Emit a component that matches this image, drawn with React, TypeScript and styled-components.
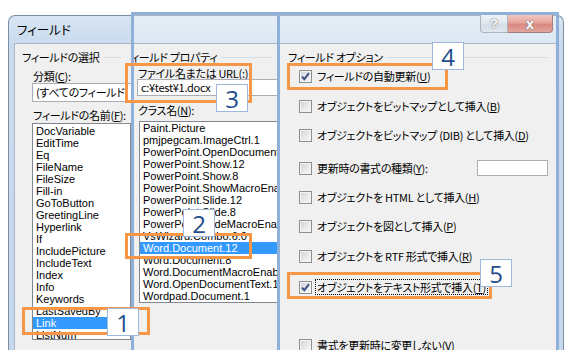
import React from 'react'
import styled, { createGlobalStyle } from 'styled-components'

const GlobalStyle = createGlobalStyle`
  html, body {
    margin: 0;
    padding: 0;
    background: #fff;
  }
`

const Page = styled.div`
  position: relative;
  width: 576px;
  height: 350px;
  box-sizing: border-box;
  padding: 15px 0 0 8px;
  overflow: hidden;
  background: #fff;
  font-family: "Noto Sans CJK JP", sans-serif;
  font-feature-settings: "palt";
  font-size: 11px;
  letter-spacing: -0.3px;
  color: #000;
`

const Window = styled.div`
  width: 556px;
  height: 335px;
  box-sizing: border-box;
  display: flex;
  flex-direction: column;
  padding: 0 6px 0 5px;
  border: 1px solid #7d8ea3;
  border-bottom: none;
  border-radius: 7px 7px 0 0;
  background: linear-gradient(to bottom, #d8e5f3 0, #cadbee 28px, #c6d8ed 100%);
`

const TitleBar = styled.div`
  height: 27px;
  display: flex;
  align-items: flex-start;
`

const Title = styled.div`
  padding-left: 3px;
  line-height: 27px;
  font-size: 12.5px;
  letter-spacing: 0;
`

const Caption = styled.div`
  margin: -1px 4px 0 auto;
  display: flex;
`

const CapButton = styled.div<{ $close?: boolean }>`
  width: ${p => (p.$close ? 45 : 28)}px;
  height: 18px;
  box-sizing: border-box;
  display: flex;
  align-items: center;
  justify-content: center;
  border: 1px solid ${p => (p.$close ? '#6f3a35' : '#7f8d9c')};
  border-top: none;
  border-left: ${p => (p.$close ? 'none' : undefined)};
  border-radius: ${p => (p.$close ? '0 0 4px 0' : '0 0 0 4px')};
  background: ${p =>
    p.$close
      ? 'linear-gradient(to bottom, #e8a89d 0%, #d7756a 45%, #c2483c 55%, #d2766a 100%)'
      : 'linear-gradient(to bottom, #e7edf4 0%, #d3dde8 45%, #bfcbd8 55%, #cfd9e4 100%)'};
  color: #fff;
  font-family: "Liberation Sans", sans-serif;
  font-weight: bold;
  font-size: ${p => (p.$close ? 14 : 13)}px;
  letter-spacing: 0;
  text-shadow: 0 0 2px #3d3d3d, 0 0 1px #3d3d3d;
`

const Client = styled.div`
  flex: 1;
  display: grid;
  grid-template-columns: 116px 148px 1fr;
  border: 1px solid #a9b6c5;
  border-bottom: none;
  background: #f0f0f0;
`

const Column = styled.div<{ $front?: boolean; $pad: number }>`
  position: ${p => (p.$front ? 'relative' : 'static')};
  z-index: ${p => (p.$front ? 1 : 'auto')};
  overflow: ${p => (p.$front ? 'hidden' : 'visible')};
  background: #f0f0f0;
  padding: 6px 0 0 ${p => p.$pad}px;
  display: flex;
  flex-direction: column;
  align-items: flex-start;
`

const GroupHead = styled.div<{ $shift?: number; $right: number }>`
  align-self: stretch;
  display: flex;
  align-items: center;
  gap: 4px;
  height: 14px;
  margin-left: ${p => p.$shift ?? 0}px;
  margin-right: ${p => p.$right}px;
  white-space: nowrap;

  &::after {
    content: '';
    flex: 1;
    height: 1px;
    background: #d5dfe5;
  }
`

const Label = styled.div<{ $mt: number; $left: number }>`
  height: 14px;
  line-height: 14px;
  margin: ${p => p.$mt}px 0 0 ${p => p.$left}px;
  white-space: nowrap;
`

const Field = styled.div<{ $w: number; $h: number; $mt: number; $left: number }>`
  width: ${p => p.$w}px;
  height: ${p => p.$h}px;
  box-sizing: border-box;
  margin: ${p => p.$mt}px 0 0 ${p => p.$left}px;
  padding-left: 3px;
  border: 1px solid #abadb3;
  background: #fff;
  line-height: ${p => p.$h - 2}px;
  white-space: nowrap;
  overflow: hidden;
`

const ListBox = styled.div<{ $w: number; $h: number; $mt: number; $left: number; $top: number }>`
  width: ${p => p.$w}px;
  height: ${p => p.$h}px;
  box-sizing: border-box;
  margin: ${p => p.$mt}px 0 0 ${p => p.$left}px;
  padding-top: ${p => p.$top}px;
  border: 1px solid #828790;
  background: #fff;
  overflow: hidden;
  font-family: "Liberation Sans", sans-serif;
  font-size: 11px;
  letter-spacing: 0;
`

const Item = styled.div<{ $sel?: boolean }>`
  height: 12px;
  line-height: 12px;
  padding-left: 3px;
  white-space: nowrap;
  background: ${p => (p.$sel ? '#3399ff' : 'transparent')};
  color: ${p => (p.$sel ? '#fff' : '#000')};
`

const Option = styled.div<{ $mt: number }>`
  align-self: stretch;
  display: flex;
  align-items: center;
  height: 16px;
  margin-top: ${p => p.$mt}px;
  padding-left: 11px;
  white-space: nowrap;
`

const Box = styled.span`
  width: 13px;
  height: 13px;
  box-sizing: border-box;
  flex: none;
  display: flex;
  align-items: center;
  justify-content: center;
  margin-right: 4px;
  border: 1px solid #8e8f8f;
  background: linear-gradient(135deg, #cdd1d6 0%, #e6e8ea 50%, #f8f8f8 100%);
  box-shadow: inset 0 0 0 1px #f4f4f4;
`

const OptText = styled.span<{ $focus?: boolean }>`
  line-height: 14px;
  padding: 0 1px;
  outline: ${p => (p.$focus ? '1px dotted #000' : 'none')};
`

const FormatBox = styled.div`
  width: 71px;
  height: 16px;
  box-sizing: border-box;
  margin: 0 8px 0 auto;
  border: 1px solid #abadb3;
  background: #fff;
`

const Overlay = styled.div`
  position: absolute;
  inset: 0;
  z-index: 2;
  pointer-events: none;
`

const Frame = styled.div<{ $x: number; $w: number }>`
  position: absolute;
  left: ${p => p.$x}px;
  top: 12px;
  width: ${p => p.$w}px;
  height: 345px;
  box-sizing: border-box;
  border: 3px solid #8fb0d9;
  border-bottom: none;
  background: linear-gradient(to bottom, rgba(255, 255, 255, 0.35) 0 28px, transparent 28px);
`

const Mark = styled.div<{ $x: number; $y: number; $w: number; $h: number }>`
  position: absolute;
  left: ${p => p.$x}px;
  top: ${p => p.$y}px;
  width: ${p => p.$w}px;
  height: ${p => p.$h}px;
  box-sizing: border-box;
  border: 3px solid #f79646;
`

const Badge = styled.div<{ $x: number; $y: number }>`
  position: absolute;
  left: ${p => p.$x}px;
  top: ${p => p.$y}px;
  width: 32px;
  height: 28px;
  box-sizing: border-box;
  display: flex;
  align-items: center;
  justify-content: center;
  border: 1px solid #9db8dc;
  background: #fff;
  color: #1f4e8d;
  font-family: "Open Sans", sans-serif;
  font-size: 24px;
  letter-spacing: 0;
`

const fieldNames = [
  'DocVariable', 'EditTime', 'Eq', 'FileName', 'FileSize', 'Fill-in', 'GoToButton',
  'GreetingLine', 'Hyperlink', 'If', 'IncludePicture', 'IncludeText', 'Index', 'Info',
  'Keywords', 'LastSavedBy', 'Link', 'ListNum',
]

const classNames = [
  'Paint.Picture', 'pmjpegcam.ImageCtrl.1', 'PowerPoint.OpenDocument', 'PowerPoint.Show.12',
  'PowerPoint.Show.8', 'PowerPoint.ShowMacroEnabled', 'PowerPoint.Slide.12', 'PowerPoint.Slide.8',
  'PowerPoint.SlideMacroEnabled', 'VsWizard.Combo.6.0', 'Word.Document.12', 'Word.Document.8',
  'Word.DocumentMacroEnabled', 'Word.OpenDocumentText.1', 'Wordpad.Document.1',
]

function Check({ checked }: { checked?: boolean }) {
  return (
    <Box>
      {checked && (
        <svg width="11" height="11" viewBox="0 0 11 11">
          <path d="M2 5.6 L4.3 8.2 L9 2.2" fill="none" stroke="#3a4f80" strokeWidth="1.9" />
        </svg>
      )}
    </Box>
  )
}

export default function App() {
  return (
    <Page>
      <GlobalStyle />
      <Window>
        <TitleBar>
          <Title>フィールド</Title>
          <Caption>
            <CapButton>?</CapButton>
            <CapButton $close>x</CapButton>
          </Caption>
        </TitleBar>
        <Client>
          <Column $front $pad={7}>
            <GroupHead $right={10}>フィールドの選択</GroupHead>
            <Label $mt={5} $left={11}>分類(<u>C</u>):</Label>
            <Field $w={100} $h={19} $mt={0} $left={10}>(すべてのフィールド)</Field>
            <Label $mt={6} $left={11}>フィールドの名前(<u>F</u>):</Label>
            <ListBox $w={99} $h={217} $mt={1} $left={10} $top={1}>
              {fieldNames.map(n => (
                <Item key={n} $sel={n === 'Link'}>{n}</Item>
              ))}
            </ListBox>
          </Column>

          <Column $pad={0}>
            <GroupHead $shift={-9} $right={6}>フィールド プロパティ</GroupHead>
            <Label $mt={2} $left={7}>ファイル名または URL(<u>:</u>)</Label>
            <Field $w={142} $h={17} $mt={-1} $left={6}>c:¥test¥1.docx</Field>
            <Label $mt={7} $left={7}>クラス名(<u>N</u>):</Label>
            <ListBox $w={139} $h={182} $mt={4} $left={8} $top={0}>
              {classNames.map(n => (
                <Item key={n} $sel={n === 'Word.Document.12'}>{n}</Item>
              ))}
            </ListBox>
          </Column>

          <Column $pad={9}>
            <GroupHead $right={8}>フィールド オプション</GroupHead>
            <Option $mt={4}>
              <Check checked />
              <OptText>フィールドの自動更新(<u>U</u>)</OptText>
            </Option>
            <Option $mt={14}>
              <Check />
              <OptText>オブジェクトをビットマップとして挿入(<u>B</u>)</OptText>
            </Option>
            <Option $mt={13}>
              <Check />
              <OptText>オブジェクトをビットマップ (DIB) として挿入(<u>D</u>)</OptText>
            </Option>
            <Option $mt={17}>
              <Check />
              <OptText>更新時の書式の種類(<u>Y</u>):</OptText>
              <FormatBox />
            </Option>
            <Option $mt={13}>
              <Check />
              <OptText>オブジェクトを HTML として挿入(<u>H</u>)</OptText>
            </Option>
            <Option $mt={13}>
              <Check />
              <OptText>オブジェクトを図として挿入(<u>P</u>)</OptText>
            </Option>
            <Option $mt={14}>
              <Check />
              <OptText>オブジェクトを RTF 形式で挿入(<u>R</u>)</OptText>
            </Option>
            <Option $mt={15}>
              <Check checked />
              <OptText $focus>オブジェクトをテキスト形式で挿入(<u>T</u>)</OptText>
            </Option>
            <Option $mt={42}>
              <Check />
              <OptText>書式を更新時に変更しない(<u>V</u>)</OptText>
            </Option>
          </Column>
        </Client>
      </Window>

      <Overlay>
        <Frame $x={131} $w={149} />
        <Frame $x={277} $w={282} />
        <Mark $x={22} $y={307} $w={128} $h={28} />
        <Badge $x={107} $y={308}>1</Badge>
        <Mark $x={125} $y={233} $w={127} $h={26} />
        <Badge $x={183} $y={209}>2</Badge>
        <Mark $x={125} $y={63} $w={127} $h={40} />
        <Badge $x={216} $y={84}>3</Badge>
        <Mark $x={287} $y={63} $w={161} $h={27} />
        <Badge $x={432} $y={42}>4</Badge>
        <Mark $x={287} $y={272} $w={205} $h={27} />
        <Badge $x={480} $y={259}>5</Badge>
      </Overlay>
    </Page>
  )
}
